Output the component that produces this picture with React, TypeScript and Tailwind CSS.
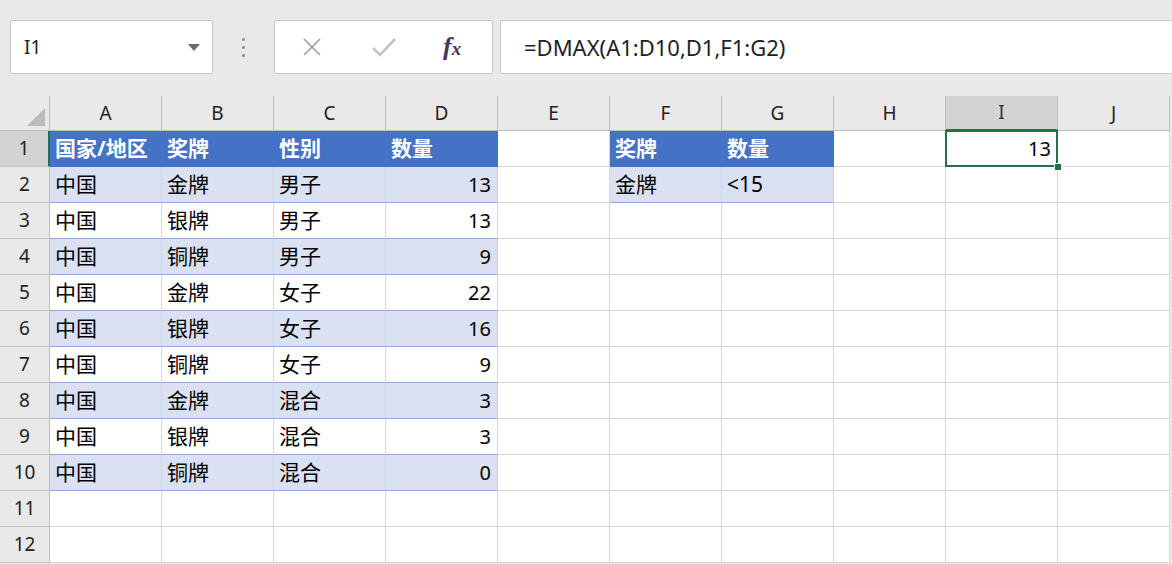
import React from 'react'

const cols = ['A', 'B', 'C', 'D', 'E', 'F', 'G', 'H', 'I', 'J']

type Cell = { text?: string; align?: 'l' | 'r'; kind?: 'head' | 'band' | 'plain' }

const data: [string, string, string, number][] = [
    ['中国', '金牌', '男子', 13],
    ['中国', '银牌', '男子', 13],
    ['中国', '铜牌', '男子', 9],
    ['中国', '金牌', '女子', 22],
    ['中国', '银牌', '女子', 16],
    ['中国', '铜牌', '女子', 9],
    ['中国', '金牌', '混合', 3],
    ['中国', '银牌', '混合', 3],
    ['中国', '铜牌', '混合', 0],
]

function buildRow(r: number): Cell[] {
    const row: Cell[] = cols.map(() => ({}))
    if (r === 1) {
        ;['国家/地区', '奖牌', '性别', '数量'].forEach((t, i) => (row[i] = { text: t, kind: 'head' }))
        row[5] = { text: '奖牌', kind: 'head' }
        row[6] = { text: '数量', kind: 'head' }
        row[8] = { text: '13', align: 'r' }
    } else if (r <= 10) {
        const d = data[r - 2]
        const band = r % 2 === 0
        row[0] = { text: d[0], kind: band ? 'band' : 'plain' }
        row[1] = { text: d[1], kind: band ? 'band' : 'plain' }
        row[2] = { text: d[2], kind: band ? 'band' : 'plain' }
        row[3] = { text: String(d[3]), align: 'r', kind: band ? 'band' : 'plain' }
        if (r === 2) {
            row[5] = { text: '金牌', kind: 'band' }
            row[6] = { text: '<15', kind: 'band' }
        }
    }
    return row
}

const font = { fontFamily: '"Noto Sans", "Noto Sans CJK SC", sans-serif' }

export default function App() {
    const rows = Array.from({ length: 12 }, (_, i) => i + 1)

    return (
        <div className="h-[564px] w-[1172px] overflow-hidden bg-[#e9e9e9] text-black" style={font}>
            {/* Formula bar */}
            <div className="flex h-[96px] items-start pt-[20px]">
                <div className="ml-[10px] flex h-[54px] w-[203px] items-center justify-between rounded-[2px] border border-[#c8c8c8] bg-white pl-[13px] pr-[12px]">
                    <span className="text-[19px] text-[#222]">I1</span>
                    <svg width="12" height="7" viewBox="0 0 12 7">
                        <polygon points="0,0 12,0 6,7" fill="#6b6b6b" />
                    </svg>
                </div>
                <div className="flex h-[54px] w-[61px] flex-col items-center justify-center gap-[5px]">
                    <span className="h-[3px] w-[3px] rounded-full bg-[#8a8a8a]" />
                    <span className="h-[3px] w-[3px] rounded-full bg-[#8a8a8a]" />
                    <span className="h-[3px] w-[3px] rounded-full bg-[#8a8a8a]" />
                </div>
                <div className="flex h-[54px] w-[219px] items-center rounded-[2px] border border-[#c8c8c8] bg-white">
                    <svg className="ml-[27px]" width="20" height="20" viewBox="0 0 20 20">
                        <path d="M2 2 L18 18 M18 2 L2 18" stroke="#9c9c9c" strokeWidth="1.6" fill="none" />
                    </svg>
                    <svg className="ml-[49px]" width="26" height="22" viewBox="0 0 26 22">
                        <path d="M2 12 L9 19 L24 3" stroke="#c4c4c4" strokeWidth="2.6" fill="none" />
                    </svg>
                    <span
                        className="ml-[46px] text-[26px] leading-none font-bold italic text-[#4a3552]"
                        style={{ fontFamily: '"Liberation Serif", serif' }}
                    >
                        f<span className="text-[19px]">x</span>
                    </span>
                </div>
                <div className="ml-[7px] flex h-[54px] flex-1 items-center rounded-l-[2px] border border-r-0 border-[#c8c8c8] bg-white pl-[23px]">
                    <span className="text-[22px] text-[#1e1e1e]">=DMAX(A1:D10,D1,F1:G2)</span>
                </div>
            </div>

            {/* Sheet */}
            <div className="grid grid-cols-[50px_repeat(10,112px)] grid-rows-[35px_repeat(12,36px)]">
                <div className="relative border-r border-b border-[#bdbdbd] bg-[#e9e9e9]">
                    <svg className="absolute right-[4px] bottom-[4px]" width="18" height="18" viewBox="0 0 18 18">
                        <polygon points="18,0 18,18 0,18" fill="#bcbcbc" />
                    </svg>
                </div>
                {cols.map((c) => (
                    <div
                        key={c}
                        className={`flex items-center justify-center border-r border-[#bdbdbd] text-[19px] ${
                            c === 'I'
                                ? 'border-b-2 border-b-[#217346] bg-[#d3d3d3] text-[#333]'
                                : 'border-b border-b-[#bdbdbd] bg-[#e9e9e9] text-[#222]'
                        }`}
                    >
                        {c}
                    </div>
                ))}

                {rows.map((r) => {
                    const cells = buildRow(r)
                    return (
                        <React.Fragment key={r}>
                            <div
                                className={`flex items-center justify-center border-b border-[#c4c4c4] text-[19px] text-[#222] ${
                                    r === 1
                                        ? 'border-r-2 border-r-[#217346] bg-[#d3d3d3]'
                                        : 'border-r border-r-[#bdbdbd] bg-[#e9e9e9]'
                                }`}
                            >
                                {r}
                            </div>
                            {cells.map((cell, ci) => {
                                const selected = r === 1 && ci === 8
                                let cls = 'border-r border-b border-[#d6d6d6] bg-white'
                                if (cell.kind === 'head') cls = 'border-b border-[#4472c4] bg-[#4472c4] font-bold text-white'
                                if (cell.kind === 'band') cls = 'border-r border-b border-r-[#c8d3ea] border-b-[#8eaadb] bg-[#d9e1f2]'
                                if (cell.kind === 'plain') cls = 'border-r border-b border-r-[#d6d6d6] border-b-[#8eaadb] bg-white'
                                const edge = (ci === 3 && r >= 1 && r <= 10) || (ci === 6 && r <= 2)
                                return (
                                    <div
                                        key={ci}
                                        className={`relative flex items-center ${cls} ${edge ? 'border-r-[#8eaadb]' : ''} ${
                                            cell.align === 'r' ? 'justify-end pr-[6px] text-[20px]' : 'pl-[5px] text-[21px]'
                                        }`}
                                    >
                                        {cell.text}
                                        {selected && (
                                            <>
                                                <div className="pointer-events-none absolute -top-px -left-px -right-px -bottom-px border-2 border-[#217346]" />
                                                <div className="absolute -right-[5px] -bottom-[5px] z-10 h-[8px] w-[8px] border border-white bg-[#217346]" />
                                            </>
                                        )}
                                    </div>
                                )
                            })}
                        </React.Fragment>
                    )
                })}
            </div>
        </div>
    )
}
